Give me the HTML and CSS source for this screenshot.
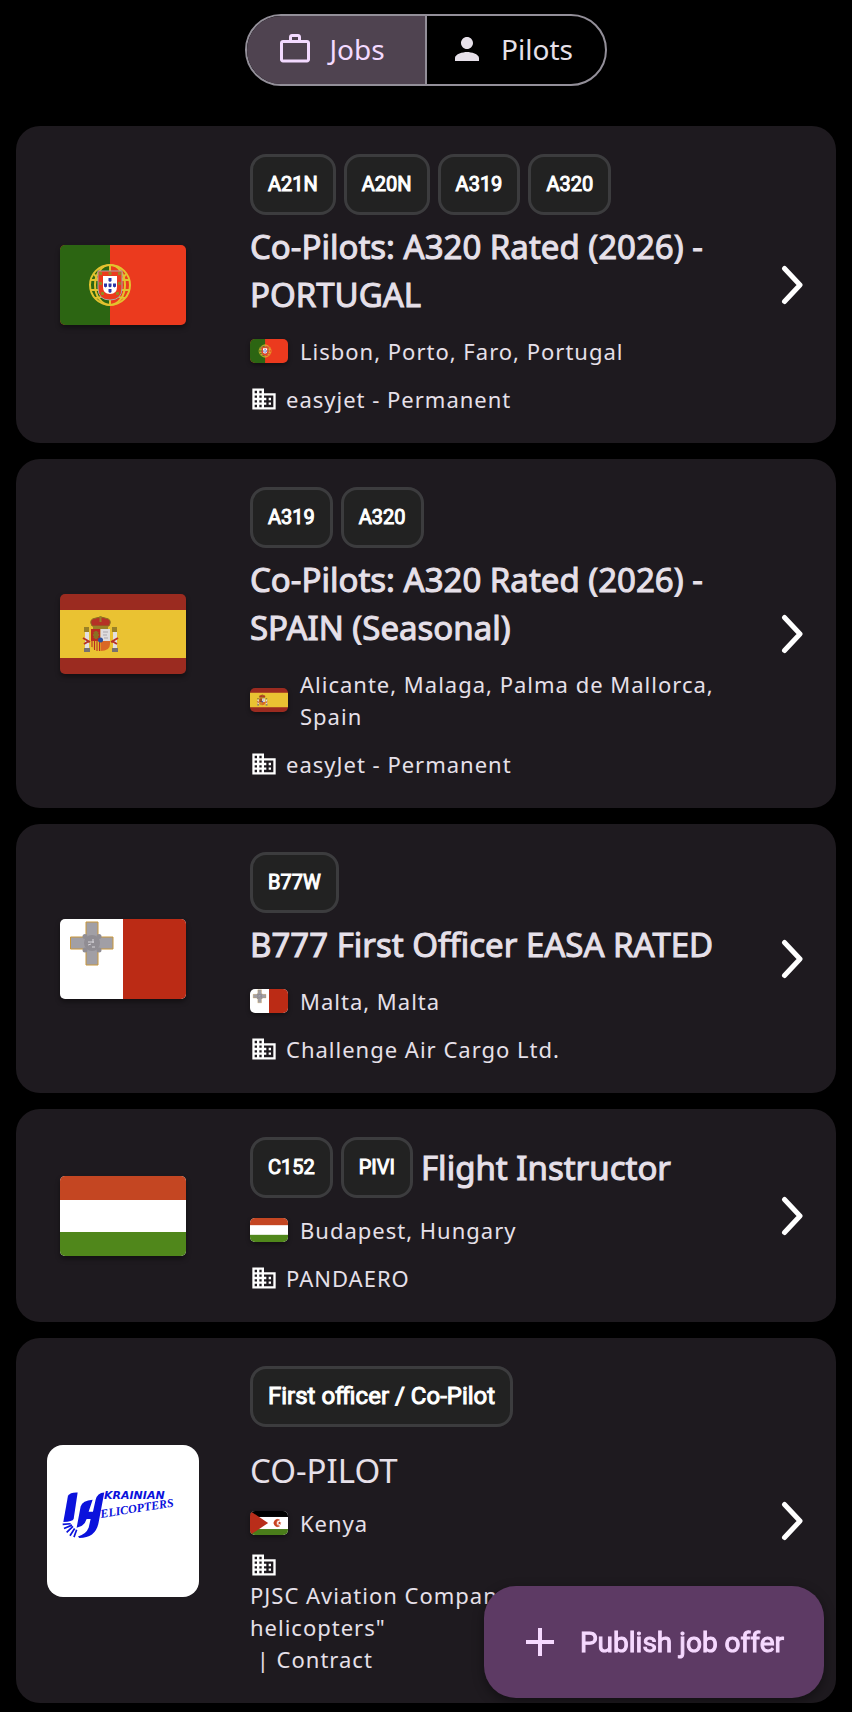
FILE: index.html
```html
<!DOCTYPE html>
<html lang="en">

<head>
    <meta charset="UTF-8" />
    <meta name="viewport" content="width=device-width, initial-scale=1.0" />
    <title>Jobs</title>

    <link rel="stylesheet" href="styles.css">
</head>

<body>
    <!-- SHARED ICONS AND FLAGS -->
    <svg class="sprite" aria-hidden="true">
        <symbol id="building" viewBox="0 0 24 24">
            <path d="M12 7V3H2v18h20V7H12zM6 19H4v-2h2v2zm0-4H4v-2h2v2zm0-4H4V9h2v2zm0-4H4V5h2v2zm4 12H8v-2h2v2zm0-4H8v-2h2v2zm0-4H8V9h2v2zm0-4H8V5h2v2zm10 12h-8v-2h2v-2h-2v-2h2v-2h-2V9h8v10zm-2-8h-2v2h2v-2zm0 4h-2v2h2v-2z" />
        </symbol>

        <symbol id="chevron" viewBox="0 0 24 40">
            <path d="M4.500 3.500L20 20L4.500 36.500" fill="none" stroke="#fff" stroke-width="5" stroke-linecap="round" stroke-linejoin="round" />
        </symbol>

        <symbol id="portugal" viewBox="0 0 126 80" preserveAspectRatio="xMidYMid slice">
            <rect width="126" height="80" fill="#eb3a1e" />
            <rect width="50" height="80" fill="#2c6512" />
            <g fill="none" stroke="#e3c22f">
                <circle cx="50" cy="40" r="20" stroke-width="2" />
                <path d="M50 20v40M31 35h38M31 45h38M34 29q16 24 31 24M66 29q-16 24-31 24" stroke-width="2" />
                <ellipse cx="50" cy="40" rx="15" ry="20" stroke-width="2" />
            </g>
            <path d="M38 26h24v17q0 12-12 12t-12-12z" fill="#eb3a1e" stroke="#aaa4a4" />
            <path d="M43 31h14v11q0 7-7 7t-7-7z" fill="#fff" />
            <g fill="#2b35a8">
                <path d="M48.500 33h3v3l-1.500 1l-1.500-1zM48.500 38.500h3v3l-1.500 1l-1.500-1zM48.500 44h3v3l-1.500 1l-1.500-1zM44 38.500h3v3l-1.500 1l-1.500-1zM53 38.500h3v3l-1.500 1l-1.500-1z" />
            </g>
            <g fill="#9a8421">
                <path d="M39 27h3v3h-3zM48.500 27h3v3h-3zM58 27h3v3h-3zM39 37h3v3h-3zM58 37h3v3h-3zM41 47h3v3h-3zM56 47h3v3h-3z" />
            </g>
        </symbol>

        <symbol id="spain" viewBox="0 0 126 80" preserveAspectRatio="xMidYMid slice">
            <rect width="126" height="80" fill="#9b2b20" />
            <rect y="16" width="126" height="48" fill="#eac232" />
            <!-- pillars -->
            <path d="M25 37h4v18h-4zM53 37h4v18h-4z" fill="#e2dfe0" />
            <path d="M24 54h6v4h-6zM52 54h6v4h-6z" fill="#77716f" />
            <path d="M24 33h5v5h-5zM52 33h5v5h-5z" fill="#9a8127" />
            <path d="M23 44l7 4M24 50l5-3M58 44l-7 4M57 50l-5-3" stroke="#b53226" stroke-width="2" />
            <!-- crown -->
            <path d="M32 32q-4-7 4-8q5-2 9 0q8 1 4 8z" fill="#b53226" stroke="#8b7022" />
            <path d="M33 32h15v3h-15zM39.500 22h2v6h-2z" fill="#9a8127" />
            <!-- shield -->
            <path d="M31 35h9.500v12H31z" fill="#b92b22" />
            <path d="M40.500 35H50v12h-9.500z" fill="#dedcde" />
            <path d="M31 47h9.500v10q-9.500 0-9.500-7z" fill="#dfb52e" />
            <path d="M40.500 47H50v3q0 7-9.500 7z" fill="#d96826" />
            <path d="M32 47v6M34.500 47v9M37 47v10M39.500 47v10" stroke="#b92b22" />
            <path d="M33 41h6M36 37v8M34 38l4 6M38 38l-4 6" stroke="#8b7022" stroke-width="2" />
            <path d="M43 38h5M43 41h4M44 44h4" stroke="#aaa5ab" />
            <circle cx="40.500" cy="46" r="2.500" fill="#2d4f9c" />
        </symbol>

        <symbol id="malta" viewBox="0 0 126 80" preserveAspectRatio="xMidYMid slice">
            <rect width="126" height="80" fill="#fff" />
            <rect x="63" width="63" height="80" fill="#bb2b15" />
            <path d="M26 3h12v15h15v12H38v16H26V30H10.500V18H26z" fill="#a19fa5" stroke="#c8963a" />
            <g fill="#908d93">
                <circle cx="32" cy="24" r="8" />
                <circle cx="25" cy="17.500" r="2.500" />
                <circle cx="39" cy="17.500" r="2.500" />
                <circle cx="25" cy="31" r="2.500" />
                <circle cx="39" cy="31" r="2.500" />
            </g>
            <path d="M28 23h6M28 26l3-1M32 28h3M33 20v4" stroke="#d5d3d8" />
        </symbol>

        <symbol id="hungary" viewBox="0 0 126 80" preserveAspectRatio="xMidYMid slice">
            <rect width="126" height="80" fill="#fff" />
            <rect width="126" height="24" fill="#c44622" />
            <rect y="56" width="126" height="24" fill="#50871b" />
        </symbol>

        <symbol id="sahara" viewBox="0 0 126 80" preserveAspectRatio="xMidYMid slice">
            <rect width="126" height="80" fill="#fff" />
            <rect width="126" height="20" fill="#000" />
            <rect y="60" width="126" height="20" fill="#4a7d1a" />
            <path d="M0 0l60 40L0 80z" fill="#b92d1a" />
            <path d="M98 30a12 12 0 1 0 0 20a9 9 0 1 1 0-20z" fill="#c9421f" stroke="#c9421f" stroke-width="2" />
            <path d="M98 34l2 4h4l-3 3l1 5l-4-3l-4 3l1-5l-3-3h4z" fill="#c9421f" />
        </symbol>
    </svg>

    <!-- TABS -->
    <nav class="tabs">
        <button type="button" class="tab active" aria-pressed="true">
            <svg class="tab-icon" viewBox="0 0 24 24"><path d="M14 6V4h-4v2h4zM4 8v11h16V8H4zm16-2c1.110 0 2 .89 2 2v11c0 1.110-.89 2-2 2H4c-1.110 0-2-.89-2-2l.01-11c0-1.110.88-2 1.990-2h4V4c0-1.110.89-2 2-2h4c1.110 0 2 .89 2 2v2h4z" /></svg>
            Jobs
        </button>
        <button type="button" class="tab" aria-pressed="false">
            <svg class="tab-icon" viewBox="0 0 24 24"><path d="M12 12c2.210 0 4-1.790 4-4s-1.790-4-4-4-4 1.790-4 4 1.790 4 4 4zm0 2c-2.670 0-8 1.340-8 4v2h16v-2c0-2.660-5.330-4-8-4z" /></svg>
            Pilots
        </button>
    </nav>

    <!-- JOB LIST -->
    <main class="jobs">
        <article class="card">
            <div class="picture">
                <svg class="flag-big"><use href="#portugal" /></svg>
            </div>
            <div class="info">
                <div class="heading">
                    <span class="chip">A21N</span>
                    <span class="chip">A20N</span>
                    <span class="chip">A319</span>
                    <span class="chip">A320</span>
                    <h2>Co-Pilots: A320 Rated (2026) - PORTUGAL</h2>
                </div>
                <div class="location">
                    <svg class="flag"><use href="#portugal" /></svg>
                    <span>Lisbon, Porto, Faro, Portugal</span>
                </div>
                <div class="company">
                    <svg class="icon"><use href="#building" /></svg>
                    <span>easyjet - Permanent</span>
                </div>
            </div>
            <a class="open" href="#" aria-label="Open job"><svg class="chevron"><use href="#chevron" /></svg></a>
        </article>

        <article class="card">
            <div class="picture">
                <svg class="flag-big"><use href="#spain" /></svg>
            </div>
            <div class="info">
                <div class="heading">
                    <span class="chip">A319</span>
                    <span class="chip">A320</span>
                    <h2>Co-Pilots: A320 Rated (2026) - SPAIN (Seasonal)</h2>
                </div>
                <div class="location">
                    <svg class="flag"><use href="#spain" /></svg>
                    <span>Alicante, Malaga, Palma de Mallorca, Spain</span>
                </div>
                <div class="company">
                    <svg class="icon"><use href="#building" /></svg>
                    <span>easyJet - Permanent</span>
                </div>
            </div>
            <a class="open" href="#" aria-label="Open job"><svg class="chevron"><use href="#chevron" /></svg></a>
        </article>

        <article class="card">
            <div class="picture">
                <svg class="flag-big"><use href="#malta" /></svg>
            </div>
            <div class="info">
                <div class="heading">
                    <span class="chip">B77W</span>
                    <h2>B777 First Officer EASA RATED</h2>
                </div>
                <div class="location">
                    <svg class="flag"><use href="#malta" /></svg>
                    <span>Malta, Malta</span>
                </div>
                <div class="company">
                    <svg class="icon"><use href="#building" /></svg>
                    <span>Challenge Air Cargo Ltd.</span>
                </div>
            </div>
            <a class="open" href="#" aria-label="Open job"><svg class="chevron"><use href="#chevron" /></svg></a>
        </article>

        <article class="card">
            <div class="picture">
                <svg class="flag-big"><use href="#hungary" /></svg>
            </div>
            <div class="info">
                <div class="heading">
                    <span class="chip">C152</span>
                    <span class="chip">PIVI</span>
                    <h2>Flight Instructor</h2>
                </div>
                <div class="location">
                    <svg class="flag"><use href="#hungary" /></svg>
                    <span>Budapest, Hungary</span>
                </div>
                <div class="company">
                    <svg class="icon"><use href="#building" /></svg>
                    <span>PANDAERO</span>
                </div>
            </div>
            <a class="open" href="#" aria-label="Open job"><svg class="chevron"><use href="#chevron" /></svg></a>
        </article>

        <article class="card partner">
            <div class="picture">
                <svg class="logo" viewBox="0 0 152 152">
                    <g transform="translate(3 25.500) scale(.333)" fill="#0b12dc">
                        <path d="M54 76Q60 65 83 66L71 146Q68 154 40 155Z" />
                        <path d="M92 108Q98 90 128 88L116 124H129L137 88Q142 67 163 66L146 156Q138 202 88 203L84 198Q108 192 116 172L122 146H110Q104 168 80 172Z" />
                        <path d="M38 162L62 160M42 174L66 164M50 186L69 168M60 196L74 174M72 200L80 178" stroke="#0b12dc" stroke-width="5" />
                    </g>
                    <text class="logo-top" x="57" y="54">KRAINIAN</text>
                    <text class="logo-bottom" x="54" y="73" transform="rotate(-9 54 73)">ELICOPTERS</text>
                </svg>
            </div>
            <div class="info">
                <div class="heading">
                    <span class="chip wide">First officer / Co-Pilot</span>
                </div>
                <h2>CO-PILOT</h2>
                <div class="location">
                    <svg class="flag"><use href="#sahara" /></svg>
                    <span>Kenya</span>
                </div>
                <div class="company">
                    <svg class="icon"><use href="#building" /></svg>
                    <span>PJSC Aviation Company "Ukrainian helicopters"
 | Contract</span>
                </div>
            </div>
            <a class="open" href="#" aria-label="Open job"><svg class="chevron"><use href="#chevron" /></svg></a>
        </article>
    </main>

    <!-- PUBLISH BUTTON -->
    <button type="button" class="publish">
        <svg class="plus" viewBox="0 0 24 24"><path d="M19 13h-6v6h-2v-6H5v-2h6V5h2v6h6v2z" /></svg>
        Publish job offer
    </button>
</body>

</html>
```
FILE: styles.css
```css
* {
    box-sizing: border-box;
}

body {
    margin: 0;
    padding: 14px 16px 8px;
    background: #000;
    color: #e6e0e9;
    font-family: "Noto Sans", sans-serif;
}

svg {
    display: block;
    flex-shrink: 0;
}

.sprite {
    display: none;
}

/* tabs */
.tabs {
    display: flex;
    width: 362px;
    height: 72px;
    margin: 0 auto 40px;
    border: 2px solid #938f99;
    border-radius: 36px;
    overflow: hidden;
}

.tab {
    flex: 1;
    display: flex;
    align-items: center;
    justify-content: center;
    gap: 16px;
    padding: 0 10px 2px 0;
    border: 0;
    background: none;
    color: #e6e0e9;
    font-family: inherit;
    font-size: 28px;
}

.tab + .tab {
    border-left: 2px solid #938f99;
}

.tab.active {
    background: #4f4350;
    color: #f3daff;
}

.tab-icon {
    width: 36px;
    height: 36px;
    fill: currentColor;
}

/* cards */
.jobs {
    display: flex;
    flex-direction: column;
    gap: 16px;
}

.card {
    display: flex;
    align-items: center;
    padding: 28px 32px 28px 0;
    border-radius: 24px;
    background: #1e1a1f;
}

.picture {
    width: 214px;
    flex-shrink: 0;
    display: flex;
    justify-content: center;
}

.flag-big {
    width: 126px;
    height: 80px;
    border-radius: 5px;
    box-shadow: 0 3px 5px rgba(0, 0, 0, 0.4);
}

.info {
    flex: 1;
    min-width: 0;
    padding: 0 20px;
    display: flex;
    flex-direction: column;
    gap: 16px;
}

.heading {
    display: flex;
    flex-wrap: wrap;
    align-items: center;
    gap: 8px;
}

.chip {
    height: 61px;
    padding: 0 15px 2px;
    display: flex;
    align-items: center;
    border: 3px solid #3c3c3e;
    border-radius: 16px;
    background: #222;
    color: #fff;
    font-family: Roboto, sans-serif;
    font-size: 20px;
    -webkit-text-stroke: 1px currentColor;
}

.chip.wide {
    font-size: 24px;
}

h2 {
    margin: 0;
    font-size: 33px;
    line-height: 48px;
    font-weight: 400;
    -webkit-text-stroke: 1px currentColor;
}

.location,
.company {
    display: flex;
    align-items: center;
    font-size: 22px;
    line-height: 32px;
    letter-spacing: 1px;
}

.location {
    gap: 12px;
}

.company {
    gap: 8px;
}

.flag {
    width: 38px;
    height: 24px;
    border-radius: 5px;
    box-shadow: 0 2px 4px rgba(0, 0, 0, 0.4);
}

.icon {
    width: 28px;
    height: 28px;
    fill: #fff;
}

.chevron {
    width: 24px;
    height: 40px;
}

/* card with a company logo */
.partner .info {
    gap: 12px;
}

.partner h2 {
    margin-top: 8px;
    -webkit-text-stroke: 0;
}

.partner .company {
    flex-direction: column;
    align-items: flex-start;
    gap: 0;
    white-space: pre-wrap;
}

.logo {
    width: 152px;
    height: 152px;
    border-radius: 16px;
    background: #fff;
}

.logo-top {
    fill: #0b12dc;
    font: italic bold 11px "DejaVu Sans", sans-serif;
}

.logo-bottom {
    fill: #0b12dc;
    font: italic bold 12px "Liberation Serif", serif;
}

/* floating button */
.publish {
    position: fixed;
    right: 28px;
    bottom: 14px;
    height: 112px;
    padding: 0 40px 0 32px;
    display: flex;
    align-items: center;
    gap: 16px;
    border: 0;
    border-radius: 32px;
    background: #5d3a64;
    color: #f6d9ff;
    font-family: Roboto, sans-serif;
    font-size: 28px;
    -webkit-text-stroke: 1px currentColor;
    box-shadow: 0 4px 12px rgba(0, 0, 0, 0.4);
}

.plus {
    width: 48px;
    height: 48px;
    fill: currentColor;
}
```
